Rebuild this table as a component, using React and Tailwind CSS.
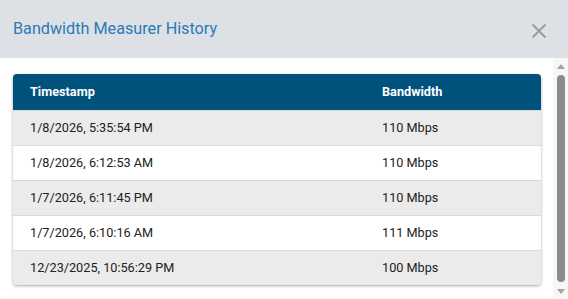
import React from "react";

const rows = [
  { time: "1/8/2026, 5:35:54 PM", bw: "110 Mbps" },
  { time: "1/8/2026, 6:12:53 AM", bw: "110 Mbps" },
  { time: "1/7/2026, 6:11:45 PM", bw: "110 Mbps" },
  { time: "1/7/2026, 6:10:16 AM", bw: "111 Mbps" },
  { time: "12/23/2025, 10:56:29 PM", bw: "100 Mbps" },
];

const App = () => {
  return (
    <div className="w-[568px] h-[299px] flex flex-col overflow-hidden bg-white font-['Roboto',sans-serif]">
      {/* Dialog header */}
      <div className="h-[58px] shrink-0 flex items-center justify-between bg-[#dde1e6] pl-[13px] pr-[21px]">
        <h2 className="text-[16.2px] text-[#2a7ab7] leading-none">
          Bandwidth Measurer History
        </h2>
        <button className="mt-[4px] text-[#999]">
          <svg width="16" height="16" viewBox="0 0 16 16">
            <path d="M1.5 1.5 L14.5 14.5 M14.5 1.5 L1.5 14.5" stroke="currentColor" strokeWidth="1.8" />
          </svg>
        </button>
      </div>

      <div className="flex-1 flex min-h-0">
        {/* History table */}
        <div className="flex-1 pt-[16px] pl-[13px] pr-[12px]">
          <div className="rounded-[4px] overflow-hidden shadow-[0_1px_3px_rgba(0,0,0,0.35)]">
            <div className="grid grid-cols-[352px_1fr] h-[36px] items-center px-[17px] bg-[#00517b] text-white text-[12.7px] font-bold">
              <div>Timestamp</div>
              <div>Bandwidth</div>
            </div>
            {rows.map((row, i) => (
              <div
                key={i}
                className={`grid grid-cols-[352px_1fr] h-[35px] items-center px-[17px] text-[12.7px] text-[#222] border-t border-[#dadada] first:border-t-0 ${
                  i % 2 === 0 ? "bg-[#ebebeb]" : "bg-white"
                }`}
              >
                <div>{row.time}</div>
                <div>{row.bw}</div>
              </div>
            ))}
          </div>
        </div>

        {/* Scrollbar */}
        <div className="w-[15px] shrink-0 flex flex-col items-center bg-[#f7f7f7]">
          <div className="h-[16px] flex items-center justify-center">
            <div className="w-0 h-0 border-l-[4px] border-r-[4px] border-b-[5px] border-l-transparent border-r-transparent border-b-[#a3a3a3]" />
          </div>
          <div className="w-[8px] flex-1 rounded-[4px] bg-[#8c8c8c] my-[1px]" />
          <div className="h-[16px] flex items-center justify-center">
            <div className="w-0 h-0 border-l-[4px] border-r-[4px] border-t-[5px] border-l-transparent border-r-transparent border-t-[#a3a3a3]" />
          </div>
        </div>
      </div>
    </div>
  );
};

export default App;
